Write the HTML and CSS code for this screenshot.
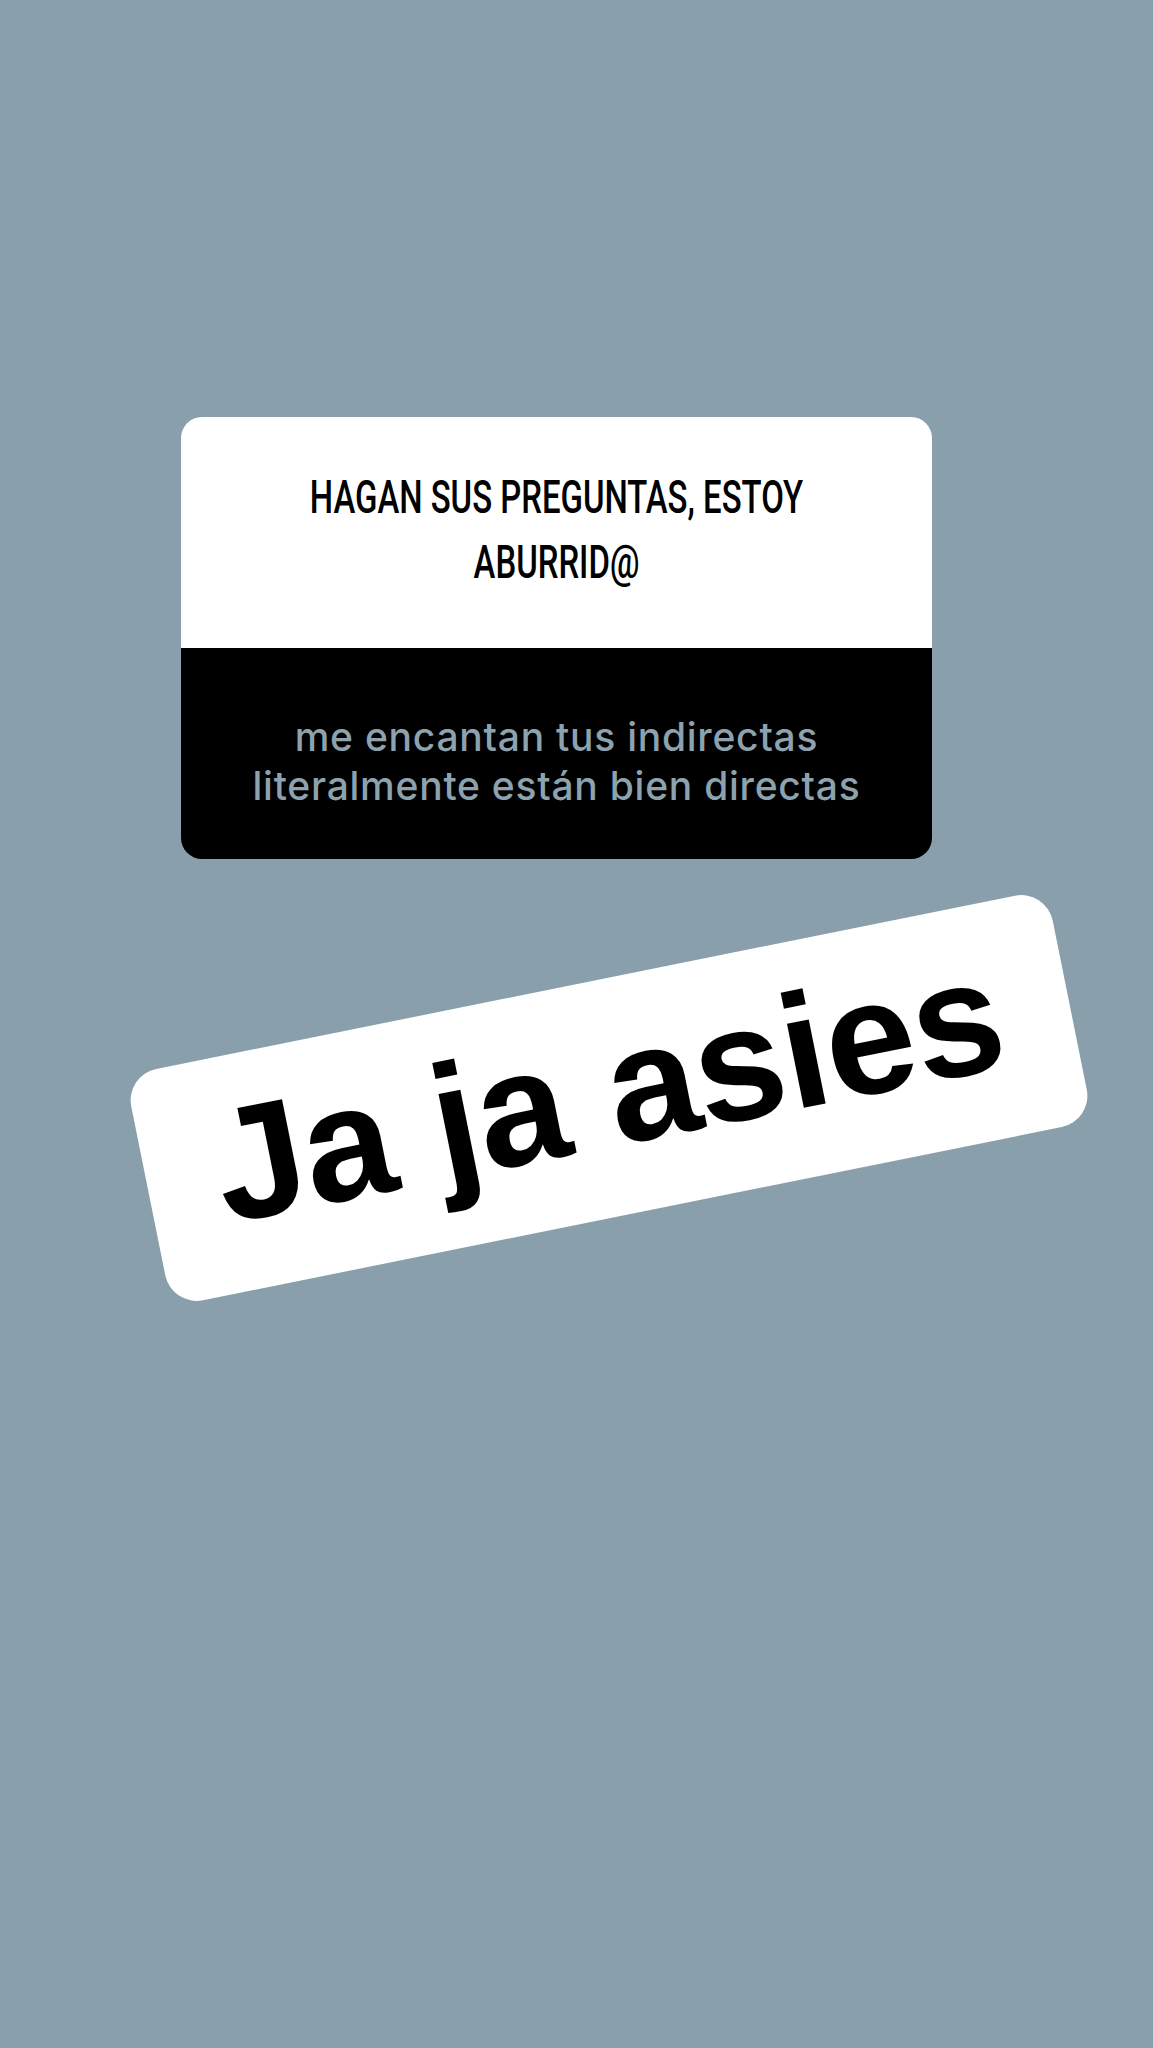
FILE: index.html
```html
<!DOCTYPE html>
<html lang="es">
<head>
<meta charset="utf-8">
<title>Story</title>
<link rel="stylesheet" href="styles.css">
</head>
<body>
<main class="stage">
  <section class="question-card">
    <div class="question-head">
      <p class="question-title">HAGAN SUS PREGUNTAS, ESTOY<br>ABURRID@</p>
    </div>
    <div class="question-answer">
      <p class="answer-text">me encantan tus indirectas<br>literalmente están bien directas</p>
    </div>
  </section>
  <div class="text-sticker">
    <span class="sticker-text">Ja ja asies</span>
  </div>
</main>
</body>
</html>
```
FILE: styles.css
```css
html, body {
  margin: 0;
  padding: 0;
  background: #89a0ac;
}
.stage {
  position: relative;
  width: 1153px;
  height: 2048px;
  overflow: hidden;
  padding-top: 417px;
  box-sizing: border-box;
}
.question-card {
  width: 751px;
  margin-left: 181px;
  border-radius: 21px;
  overflow: hidden;
}
.question-head {
  background: #ffffff;
  height: 231px;
  box-sizing: border-box;
  padding-top: 48px;
  text-align: center;
}
.question-title {
  margin: 0;
  font-family: Roboto, "Liberation Sans", sans-serif;
  font-weight: 500;
  font-size: 46px;
  line-height: 64.5px;
  color: #000;
  transform: scaleX(0.715);
  transform-origin: center;
  white-space: nowrap;
}
.question-answer {
  background: #000000;
  height: 211px;
  box-sizing: border-box;
  padding-top: 64px;
  text-align: center;
}
.answer-text {
  margin: 0;
  font-family: Inter, "Noto Sans", sans-serif;
  font-weight: 500;
  font-size: 39px;
  line-height: 49px;
  letter-spacing: 0.75px;
  color: #8ca3af;
  white-space: nowrap;
}
.text-sticker {
  position: absolute;
  left: 139px;
  top: 979.5px;
  width: 940px;
  height: 236px;
  box-sizing: border-box;
  padding-bottom: 16px;
  background: #ffffff;
  border-radius: 32px;
  transform: rotate(-11.4deg);
  display: flex;
  align-items: center;
  justify-content: center;
}
.sticker-text {
  font-family: "Liberation Sans", Arial, sans-serif;
  font-weight: 700;
  font-size: 162px;
  line-height: 162px;
  letter-spacing: -1px;
  color: #000;
  white-space: nowrap;
}
```
